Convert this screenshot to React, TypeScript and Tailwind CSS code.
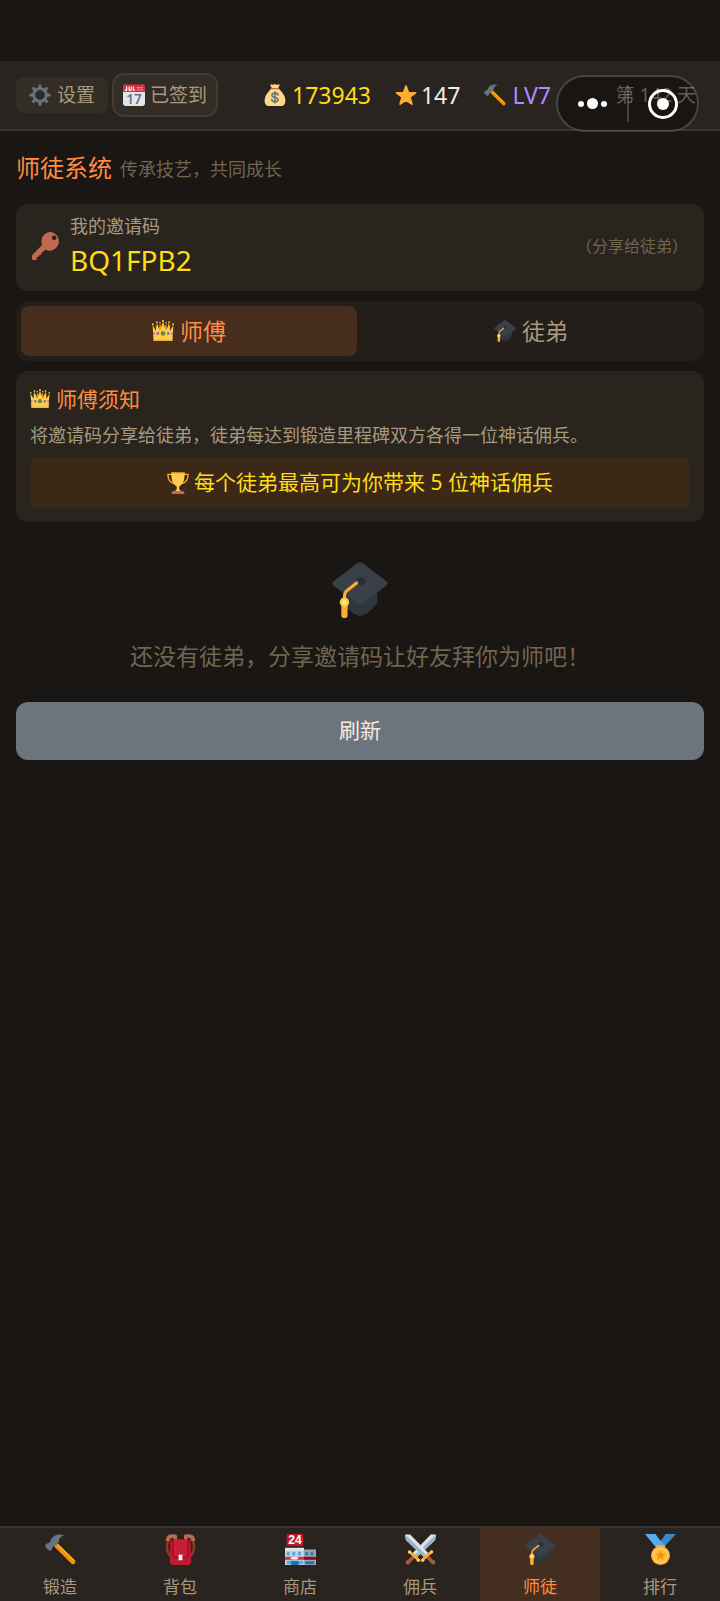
import { useState } from "react";
import type { ReactNode } from "react";

type IconProps = { className?: string };

function Svg({ className, children }: IconProps & { children: ReactNode }) {
  return (
    <svg
      viewBox="0 0 36 36"
      aria-hidden="true"
      className={`shrink-0 overflow-visible ${className ?? ""}`}
    >
      {children}
    </svg>
  );
}

function GearIcon({ className }: IconProps) {
  return (
    <Svg className={className}>
      <g stroke="#66757f" strokeWidth="5" strokeLinecap="round">
        <path d="M18 2.8v5M18 28.2v5M2.8 18h5M28.2 18h5M7.3 7.3l3.5 3.5M25.2 25.2l3.5 3.5M28.7 7.3l-3.5 3.5M10.8 25.2l-3.5 3.5" />
      </g>
      <circle cx="18" cy="18" r="10.5" fill="none" stroke="#66757f" strokeWidth="4.5" />
    </Svg>
  );
}

function CalendarIcon({ className }: IconProps) {
  return (
    <Svg className={className}>
      <path fill="#e0e7ec" d="M0 11h36v21a4 4 0 0 1-4 4H4a4 4 0 0 1-4-4z" />
      <path fill="#dd2e44" d="M3 1h30a3 3 0 0 1 3 3v9H0V4a3 3 0 0 1 3-3z" />
      <path fill="#fff" d="M5 4h2v6a2 2 0 0 1-4 0V9h1.400v1H5zM9 4h1.800v5.500h1.600V4h1.800v7H9zM16 4h1.700v5.500h2V11H16z" />
      <path
        fill="#f4abba"
        d="M23 5h2v2h-2zM26.500 5h2v2h-2zM30 5h2v2h-2zM23 8.500h2v2h-2zM26.500 8.500h2v2h-2zM30 8.500h2v2h-2z"
      />
      <circle cx="4" cy="2" r="1.500" fill="#66757f" />
      <circle cx="32" cy="2" r="1.500" fill="#66757f" />
      <text
        x="18"
        y="32"
        textAnchor="middle"
        fontSize="22"
        fontWeight="600"
        fill="#66757f"
        fontFamily="Noto Sans, sans-serif"
      >
        17
      </text>
    </Svg>
  );
}

function MoneyIcon({ className }: IconProps) {
  return (
    <Svg className={className}>
      <path
        fill="#fdd888"
        d="M23 7H13C8 11 1 19 1 27c0 5 2 9 7 9h20c5 0 7-4 7-9 0-8-7-16-12-20z"
      />
      <path
        fill="#fdd888"
        d="M11 1c2-1 3 1 4.500 0s3-1 4.500 0 3-1 5 0c2 .800-1 4-2 6H13c-1-2-4-5-2-6z"
      />
      <path stroke="#bf6952" strokeWidth="2" strokeLinecap="round" d="M12 7.500h12" />
      <path
        fill="none"
        stroke="#67757f"
        strokeWidth="2.600"
        strokeLinecap="round"
        d="M18 13v18M23 18c-.500-2.300-2.500-3-5-3-3 0-5 1.300-5 3.500 0 5 10 2 10 7 0 2.300-2 3.500-5 3.500s-5-1.200-5.300-3.500"
      />
    </Svg>
  );
}

function StarIcon({ className }: IconProps) {
  return (
    <Svg className={className}>
      <path
        fill="#ffac33"
        stroke="#ffac33"
        strokeWidth="3"
        strokeLinejoin="round"
        d="M18 3.500l3.900 11h11.600l-9.300 7 3.400 11.300L18 26l-9.600 6.800L11.800 21.500l-9.300-7h11.600z"
      />
    </Svg>
  );
}

function HammerIcon({ className }: IconProps) {
  return (
    <Svg className={className}>
      <path stroke="#f4900c" strokeWidth="5.600" strokeLinecap="round" d="M13.500 13.500l19 18.800" />
      <path stroke="#ffac33" strokeWidth="1.600" strokeLinecap="round" d="M15.500 13l18 17.800" />
      <path
        fill="#66757f"
        d="M22 1.500C16-.500 10.500 1.500 7.500 5.500 6 7.500 6.500 9 5 10.200c-1 .800-2.300.400-3.300 1.300L.300 13c-.500.600-.300 1.300.200 1.900l4 4.200c.600.600 1.400.600 2 .100l1.500-1.500c.900-1 .400-2.100 1.300-3 1.500-1.500 3.400-1.100 5-2.700 2.200-2.400 1.200-5 3.200-7.600 1.200-1.500 3-1.500 4.500-2.900z"
      />
    </Svg>
  );
}

function KeyIcon({ className }: IconProps) {
  return (
    <Svg className={className}>
      <path
        fill="#c1694f"
        fillRule="evenodd"
        d="M24 0a12 12 0 0 0-11 16.600L1 28.800C.300 29.500 0 30 0 31v3.500C0 35.400.600 36 1.500 36H4c1.500 0 2-.800 2-2v-1.500c2 0 3-.500 3-2.500 2.300 0 3-1 3-3l5.500-4.200A12 12 0 1 0 24 0zm4.500 4.500a3 3 0 1 1 0 6 3 3 0 0 1 0-6z"
      />
    </Svg>
  );
}

function CrownIcon({ className }: IconProps) {
  return (
    <Svg className={className}>
      <path
        fill="#f4900c"
        d="M7 24L6 8l5 9 2-12 4 11 1-12 1 12 4-11 2 12 5-9-1 16z"
      />
      <path
        fill="#ffcc4d"
        d="M2.500 34L1 8l5.500 10L8 4l4.500 13L14 15l4-12 4 12 1.500 2L28 4l1.500 14L35 8l-1.500 26z"
      />
      <path fill="#ffac33" d="M2.500 32h31v2h-31z" />
      <g fill="#ffcc4d">
        <circle cx="1.500" cy="7" r="1.500" />
        <circle cx="8" cy="3.500" r="1.500" />
        <circle cx="13" cy="4.500" r="1.300" />
        <circle cx="18" cy="1.800" r="1.800" />
        <circle cx="23" cy="4.500" r="1.300" />
        <circle cx="28" cy="3.500" r="1.500" />
        <circle cx="34.500" cy="7" r="1.500" />
      </g>
      <circle cx="18" cy="22" r="3.800" fill="#5c913b" />
      <circle cx="9.500" cy="22" r="2.400" fill="#9266cc" />
      <circle cx="26.500" cy="22" r="2.400" fill="#9266cc" />
      <ellipse cx="3.200" cy="22" rx="1.200" ry="2" fill="#9266cc" />
      <ellipse cx="32.800" cy="22" rx="1.200" ry="2" fill="#9266cc" />
    </Svg>
  );
}

function CapIcon({ className }: IconProps) {
  return (
    <Svg className={className}>
      <path
        fill="#2f363c"
        d="M7 17v9c2 4 8 8.500 11 8.500 4 0 8-4 10.500-7.500 1-1.500 1-3 .500-5V16z"
      />
      <path
        fill="#394047"
        d="M16.300.700c1-.800 2.400-.800 3.400 0l15.200 11.600c1 .800 1 2 0 2.800L19.700 26.600c-1 .800-2.400.800-3.400 0L1.100 15.100c-1-.800-1-2 0-2.800z"
      />
      <ellipse cx="18.500" cy="12.300" rx="3" ry="2.600" fill="#292f33" />
      <path
        fill="none"
        stroke="#ffac33"
        strokeWidth="2"
        strokeLinecap="round"
        d="M15.800 13.500L9.500 18.500C8 19.700 8 21 8 25"
      />
      <path fill="#ffac33" d="M6 27h4v7.500c0 2-4 2-4 0z" />
      <circle cx="8" cy="25.800" r="3" fill="#ffcc4d" />
      <circle cx="8" cy="25.800" r="1.200" fill="#ffe8b6" />
    </Svg>
  );
}

function TrophyIcon({ className }: IconProps) {
  return (
    <Svg className={className}>
      <path
        fill="none"
        stroke="#ffac33"
        strokeWidth="2.200"
        d="M9 4H1.500C1.500 11 4 17 12 19M27 4h7.500c0 7-2.500 13-10.500 15"
      />
      <path
        fill="#ffcc4d"
        d="M7 1h22c0 11-2 19-8 22-1 .700-1 2-1 3 0 3 1 4 3 5H13c2-1 3-2 3-5 0-1 0-2.300-1-3C9 20 7 12 7 1z"
      />
      <path fill="#ffac33" d="M7 1h22v2H7z" />
      <path fill="#c1694f" d="M10 31h16c1 0 2 2 3 5H7c1-3 2-5 3-5z" />
    </Svg>
  );
}

function BackpackIcon({ className }: IconProps) {
  return (
    <Svg className={className}>
      <path fill="none" stroke="#8a3a2b" strokeWidth="3" d="M7 5C1 9 .500 19 7 27M29 5c6 4 6.500 14 0 22" />
      <path
        fill="none"
        stroke="#c1694f"
        strokeWidth="4"
        strokeLinejoin="round"
        d="M3 8C3 3 5 2 12 2.500V8M33 8c0-5-2-6-9-5.500V8"
      />
      <path fill="#be1931" d="M6 12c0-4 3-6 6-6h12c3 0 6 2 6 6v15c1 3 .500 9-3 9H9c-3.500 0-4-6-3-9z" />
      <path
        fill="#c61f3a"
        stroke="#9a0a24"
        strokeWidth="1.300"
        d="M9.500 7v16c0 2 1.500 4 4 4h9c2.500 0 4-2 4-4V7"
      />
      <path fill="#f5f8fa" d="M15.800 24h4.400v6.500h-4.400z" />
    </Svg>
  );
}

function ShopIcon({ className }: IconProps) {
  return (
    <Svg className={className}>
      <path fill="#ccd6dd" d="M0 17h22v19H0z" />
      <path fill="#99aab5" d="M22 18h14v18H22z" />
      <path fill="#e1e8ed" d="M0 16h22v3H0z" />
      <path fill="#5ba3dc" d="M2 20.500h3.500V25H2zM8.500 20.500H12V25H8.500zM15 20.500h3.500V25H15z" />
      <path fill="#3b78b3" d="M23.500 20.500H27V25h-3.500zM29.500 20.500H33V25h-3.500z" />
      <path fill="#dd2e44" d="M0 26.500h22V30H0z" />
      <path fill="#a0041e" d="M22 26.500h14V30H22z" />
      <ellipse cx="11" cy="28.200" rx="4.500" ry="1.400" fill="#fff" />
      <path fill="#55acee" d="M2 31h5v4H2zM16 31h5v4h-5z" />
      <path fill="#2a6fb5" d="M7 31h9v5H7zM23.500 31.500H34V35H23.500z" />
      <rect x="2" width="19" height="14" rx="1" fill="#be1931" />
      <text
        x="11.500"
        y="12"
        textAnchor="middle"
        fontSize="14"
        fontWeight="700"
        fill="#fff"
        fontFamily="Liberation Sans, sans-serif"
      >
        24
      </text>
    </Svg>
  );
}

function Sword() {
  return (
    <>
      <path fill="#dbe4ea" d="M0 1.500C0 .800.500.500 1 .500h5L27 22l-5 5L1 7z" />
      <path fill="#9fb3c1" d="M1 1.500l23.500 23L22 27 1 7z" />
      <path stroke="#a8593f" strokeWidth="4" d="M25 25.500l6.500 6.500" />
      <circle cx="32.500" cy="32.800" r="2.700" fill="#a8593f" />
      <path stroke="#ffac33" strokeWidth="3" strokeLinecap="round" d="M20.500 30l10-9" />
      <circle cx="20.500" cy="30.500" r="2" fill="#ffcc4d" />
      <circle cx="30.800" cy="21" r="2" fill="#ffcc4d" />
    </>
  );
}

function SwordsIcon({ className }: IconProps) {
  return (
    <Svg className={className}>
      <g transform="matrix(-1 0 0 1 36 0)">
        <Sword />
      </g>
      <Sword />
    </Svg>
  );
}

function MedalIcon({ className }: IconProps) {
  return (
    <Svg className={className}>
      <path fill="#3b88c3" d="M24 0h12L21.500 16l-6-4z" />
      <path fill="#55acee" d="M0 0h12l12 15-6 2-5-1z" />
      <path fill="#ffac33" d="M13 13h10v4H13z" />
      <circle cx="18" cy="25" r="11" fill="#ffac33" />
      <circle cx="18" cy="25" r="9" fill="#ffd983" />
      <circle cx="18" cy="25" r="8" fill="#ffbe45" />
      <path
        fill="#f4900c"
        d="M18 18.500l1.700 4.500h4.600l-3.700 2.900 1.400 4.600-4-2.700-4 2.700 1.400-4.600-3.700-2.900h4.600z"
      />
    </Svg>
  );
}

const roles = [
  { key: "master", label: "师傅", Icon: CrownIcon },
  { key: "apprentice", label: "徒弟", Icon: CapIcon },
];

const navItems = [
  { label: "锻造", Icon: HammerIcon },
  { label: "背包", Icon: BackpackIcon },
  { label: "商店", Icon: ShopIcon },
  { label: "佣兵", Icon: SwordsIcon },
  { label: "师徒", Icon: CapIcon },
  { label: "排行", Icon: MedalIcon },
];

function TopBar() {
  return (
    <header className="relative mt-[61px] flex h-[70px] items-center border-b-2 border-[#3a3430] bg-[#292420] px-4">
      <div className="flex items-center gap-1">
        <button
          type="button"
          className="flex h-9 items-center gap-1.5 rounded-lg bg-[#342d26] px-[13px] text-[19px] text-[#a8997f]"
        >
          <GearIcon className="size-[22px]" />
          设置
        </button>
        <button
          type="button"
          className="flex h-11 items-center gap-[5px] rounded-xl border-2 border-[#423b34] bg-[#342d26] px-[9px] text-[19px] text-[#a8997f]"
        >
          <CalendarIcon className="size-[22px]" />
          已签到
        </button>
      </div>

      <div className="ml-[46px] flex items-center gap-6 text-[23px]">
        <span className="flex items-center gap-1.5 text-[#ffdc14]">
          <MoneyIcon className="size-[22px]" />
          173943
        </span>
        <span className="flex items-center gap-1 text-[#f5ece0]">
          <StarIcon className="size-[22px]" />
          147
        </span>
        <span className="flex items-center gap-1.5 text-[#b388ff]">
          <HammerIcon className="size-[22px]" />
          LV7
        </span>
      </div>

      <span className="ml-auto mr-2 whitespace-nowrap text-[19px] text-[#a8997f]">第 142 天</span>

      <div className="absolute right-[21px] top-3.5 flex h-[57px] w-[143px] items-center rounded-full border-2 border-white/20 bg-black/40">
        <button type="button" aria-label="更多" className="flex flex-1 items-center justify-center gap-[3px]">
          <i className="size-1.5 rounded-full bg-white" />
          <i className="size-[11px] rounded-full bg-white" />
          <i className="size-1.5 rounded-full bg-white" />
        </button>
        <span className="h-9 w-0.5 bg-white/20" />
        <button type="button" aria-label="关闭" className="flex flex-1 items-center justify-center">
          <i className="flex size-[30px] items-center justify-center rounded-full border-3 border-white">
            <i className="size-3 rounded-full bg-white" />
          </i>
        </button>
      </div>
    </header>
  );
}

function InviteCard() {
  return (
    <section className="flex h-[87px] items-center rounded-xl bg-[#29241e] px-4 pb-1">
      <KeyIcon className="size-7" />
      <div className="ml-2.5 flex flex-col">
        <span className="text-[18px] leading-7 text-[#a8997f]">我的邀请码</span>
        <span className="text-[28px] leading-10 text-[#ffdc14]">BQ1FPB2</span>
      </div>
      <span className="ml-auto text-[16px] text-[#70654f]">（分享给徒弟）</span>
    </section>
  );
}

function RoleTabs() {
  const [role, setRole] = useState("master");

  return (
    <div role="tablist" className="mt-2.5 flex gap-1.5 rounded-xl bg-[#231e1a] p-[5px]">
      {roles.map(({ key, label, Icon }) => (
        <button
          key={key}
          type="button"
          role="tab"
          aria-selected={role === key}
          onClick={() => setRole(key)}
          className={`flex h-[50px] flex-1 items-center justify-center gap-1.5 rounded-lg text-[23px] ${
            role === key ? "bg-[#462d1c] text-[#ff8c42]" : "text-[#a8997f]"
          }`}
        >
          <Icon className="size-[22px]" />
          {label}
        </button>
      ))}
    </div>
  );
}

function MasterNotice() {
  return (
    <section className="mt-2.5 rounded-xl bg-[#29241e] px-3.5 pb-3.5 pt-3">
      <h2 className="flex items-center gap-1.5 text-[21px] leading-8 text-[#ff8c42]">
        <CrownIcon className="size-5" />
        师傅须知
      </h2>
      <p className="mt-1 text-[18px] leading-8 text-[#a8997f]">
        将邀请码分享给徒弟，徒弟每达到锻造里程碑双方各得一位神话佣兵。
      </p>
      <p className="mt-1.5 flex h-[51px] items-center justify-center gap-[5px] rounded-lg bg-[#3b2817] text-[21px] text-[#ffdc14]">
        <TrophyIcon className="size-[22px]" />
        每个徒弟最高可为你带来 5 位神话佣兵
      </p>
    </section>
  );
}

function BottomNav() {
  const [active, setActive] = useState("师徒");

  return (
    <nav className="grid h-[75px] grid-cols-6 border-t-2 border-[#3a3430] bg-[#292420]">
      {navItems.map(({ label, Icon }) => (
        <button
          key={label}
          type="button"
          onClick={() => setActive(label)}
          className={`flex flex-col items-center gap-1.5 pt-1.5 text-[17px] leading-8 ${
            active === label ? "bg-[#432e20] text-[#ff8c42]" : "text-[#a8997f]"
          }`}
        >
          <Icon className="size-[31px]" />
          {label}
        </button>
      ))}
    </nav>
  );
}

export default function App() {
  return (
    <div className="flex min-h-screen flex-col bg-[#1a1614] font-['Noto_Sans','Noto_Sans_CJK_SC',sans-serif]">
      <TopBar />

      <main className="flex-1 px-4">
        <div className="flex h-[73px] items-center gap-2">
          <h1 className="text-[24px] text-[#ff8c42]">师徒系统</h1>
          <span className="pt-1 text-[18px] text-[#70654f]">传承技艺，共同成长</span>
        </div>

        <InviteCard />
        <RoleTabs />
        <MasterNotice />

        <div className="flex flex-col items-center pt-10">
          <CapIcon className="size-14" />
          <p className="mt-[18px] text-[23px] leading-10 text-[#70654f]">
            还没有徒弟，分享邀请码让好友拜你为师吧！
          </p>
        </div>

        <button
          type="button"
          className="mt-[26px] h-[58px] w-full rounded-xl bg-[#6c757d] text-[21px] text-[#f5ece0]"
        >
          刷新
        </button>
      </main>

      <BottomNav />
    </div>
  );
}
